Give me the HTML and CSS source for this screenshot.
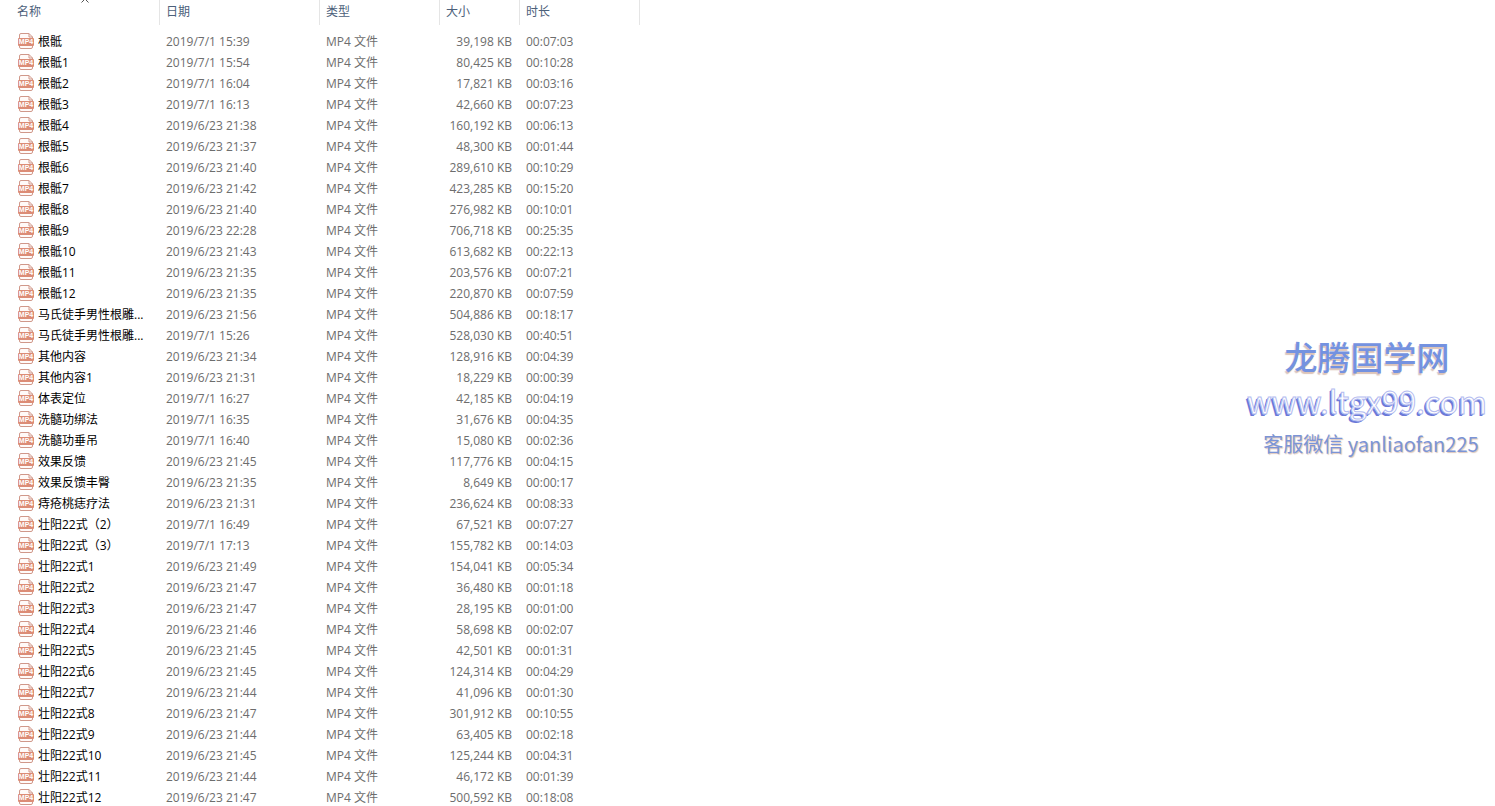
FILE: index.html
```html
<!DOCTYPE html>
<html lang="zh-CN">
  <head>
    <meta charset="UTF-8" />
    <meta name="viewport" content="width=device-width, initial-scale=1.0" />
    <title>文件列表</title>
    <link rel="stylesheet" href="styles.css">
  </head>
  <body>
    <main class="explorer">
      <table class="file-table">
        <thead>
          <tr>
            <th class="col-name" aria-sort="ascending">
              <button class="sort-btn">名称</button>
              <svg class="sort-arrow" viewBox="0 0 8 4" aria-hidden="true">
                <path d="M.5 3.500L4 0L7.500 3.500" fill="none" stroke="#555" />
              </svg>
            </th>
            <th class="col-date"><button class="sort-btn">日期</button></th>
            <th class="col-type"><button class="sort-btn">类型</button></th>
            <th class="col-size"><button class="sort-btn">大小</button></th>
            <th class="col-time"><button class="sort-btn">时长</button></th>
          </tr>
        </thead>
        <tbody id="file-list"></tbody>
      </table>

      <div class="watermark">
        <p class="watermark-title">龙腾国学网</p>
        <p class="watermark-url">www.ltgx99.com</p>
        <p class="watermark-contact">客服微信 yanliaofan225</p>
      </div>
    </main>

    <script>
      // 名称, 日期, 大小 (KB), 时长
      const files = [
        ["根骶", "2019/7/1 15:39", "39,198", "00:07:03"],
        ["根骶1", "2019/7/1 15:54", "80,425", "00:10:28"],
        ["根骶2", "2019/7/1 16:04", "17,821", "00:03:16"],
        ["根骶3", "2019/7/1 16:13", "42,660", "00:07:23"],
        ["根骶4", "2019/6/23 21:38", "160,192", "00:06:13"],
        ["根骶5", "2019/6/23 21:37", "48,300", "00:01:44"],
        ["根骶6", "2019/6/23 21:40", "289,610", "00:10:29"],
        ["根骶7", "2019/6/23 21:42", "423,285", "00:15:20"],
        ["根骶8", "2019/6/23 21:40", "276,982", "00:10:01"],
        ["根骶9", "2019/6/23 22:28", "706,718", "00:25:35"],
        ["根骶10", "2019/6/23 21:43", "613,682", "00:22:13"],
        ["根骶11", "2019/6/23 21:35", "203,576", "00:07:21"],
        ["根骶12", "2019/6/23 21:35", "220,870", "00:07:59"],
        ["马氏徒手男性根雕...", "2019/6/23 21:56", "504,886", "00:18:17"],
        ["马氏徒手男性根雕...", "2019/7/1 15:26", "528,030", "00:40:51"],
        ["其他内容", "2019/6/23 21:34", "128,916", "00:04:39"],
        ["其他内容1", "2019/6/23 21:31", "18,229", "00:00:39"],
        ["体表定位", "2019/7/1 16:27", "42,185", "00:04:19"],
        ["洗髓功绑法", "2019/7/1 16:35", "31,676", "00:04:35"],
        ["洗髓功垂吊", "2019/7/1 16:40", "15,080", "00:02:36"],
        ["效果反馈", "2019/6/23 21:45", "117,776", "00:04:15"],
        ["效果反馈丰臀", "2019/6/23 21:35", "8,649", "00:00:17"],
        ["痔疮桃痣疗法", "2019/6/23 21:31", "236,624", "00:08:33"],
        ["壮阳22式（2）", "2019/7/1 16:49", "67,521", "00:07:27"],
        ["壮阳22式（3）", "2019/7/1 17:13", "155,782", "00:14:03"],
        ["壮阳22式1", "2019/6/23 21:49", "154,041", "00:05:34"],
        ["壮阳22式2", "2019/6/23 21:47", "36,480", "00:01:18"],
        ["壮阳22式3", "2019/6/23 21:47", "28,195", "00:01:00"],
        ["壮阳22式4", "2019/6/23 21:46", "58,698", "00:02:07"],
        ["壮阳22式5", "2019/6/23 21:45", "42,501", "00:01:31"],
        ["壮阳22式6", "2019/6/23 21:45", "124,314", "00:04:29"],
        ["壮阳22式7", "2019/6/23 21:44", "41,096", "00:01:30"],
        ["壮阳22式8", "2019/6/23 21:47", "301,912", "00:10:55"],
        ["壮阳22式9", "2019/6/23 21:44", "63,405", "00:02:18"],
        ["壮阳22式10", "2019/6/23 21:45", "125,244", "00:04:31"],
        ["壮阳22式11", "2019/6/23 21:44", "46,172", "00:01:39"],
        ["壮阳22式12", "2019/6/23 21:47", "500,592", "00:18:08"],
      ];

      const mp4Icon = `<svg class="file-icon" viewBox="0 0 16 16" aria-hidden="true">
        <path d="M1.500 5V2Q1.500 .5 3 .5H11L14.500 4V5M1.500 12V14Q1.500 15.500 3 15.500H13Q14.500 15.500 14.500 14V12" fill="#fffaf8" stroke="#d0988a" />
        <path d="M11 .5V4H14.500" fill="none" stroke="#d0988a" />
        <rect x="0" y="5" width="16" height="8" rx="1" fill="#dc8c76" />
        <text class="icon-label" x="8" y="11" text-anchor="middle">MP4</text>
      </svg>`;

      document.getElementById("file-list").innerHTML = files
        .map(
          ([name, date, size, time]) => `
          <tr>
            <td class="file-name">${mp4Icon}${name}</td>
            <td>${date}</td>
            <td>MP4 文件</td>
            <td class="file-size">${size} KB</td>
            <td>${time}</td>
          </tr>`
        )
        .join("");
    </script>
  </body>
</html>
```
FILE: styles.css
```css
* {
  box-sizing: border-box;
}

body {
  margin: 0;
  background: white;
  font-family: "Open Sans", "Noto Sans CJK SC", sans-serif;
  font-size: 12px;
}

.explorer {
  position: relative;
  height: 100vh;
  overflow: hidden;
}

.file-table {
  width: 640px;
  table-layout: fixed;
  border-collapse: separate;
  border-spacing: 0;
  color: #6d6d6d;
}

.file-table th {
  position: relative;
  height: 25px;
  padding: 0 0 0 6px;
  border-right: 1px solid #e5e5e5;
  text-align: left;
  line-height: 20px;
  vertical-align: top;
}

.file-table .col-name {
  width: 160px;
  padding-left: 17px;
}

.col-date {
  width: 160px;
}

.col-type,
.col-time {
  width: 120px;
}

.col-size {
  width: 80px;
}

.sort-btn {
  display: block;
  padding: 2px 0 0;
  border: none;
  background: none;
  color: #4c607a;
  font: inherit;
  font-weight: normal;
  line-height: 20px;
  cursor: pointer;
}

.sort-arrow {
  position: absolute;
  top: -1px;
  left: 81px;
  width: 8px;
  height: 4px;
}

/* 表头与列表之间的间距 */
.file-table tbody::before {
  content: "";
  display: table-row;
  height: 6px;
}

.file-table td {
  height: 21px;
  padding: 0 0 0 6px;
  line-height: 20px;
  white-space: nowrap;
}

.file-table .file-name {
  padding-left: 18px;
  color: black;
}

.file-icon {
  width: 16px;
  height: 16px;
  margin-right: 4px;
  vertical-align: -3px;
}

.icon-label {
  fill: white;
  font-family: "Liberation Sans", sans-serif;
  font-size: 7px;
  font-weight: bold;
}

.file-table .file-size {
  padding: 0 8px 0 0;
  text-align: right;
}

.watermark {
  position: absolute;
  top: 334px;
  right: 8px;
  font-family: "Noto Sans CJK SC", sans-serif;
  text-align: center;
  white-space: nowrap;
}

.watermark p {
  margin: 0;
}

.watermark-title {
  color: #7492e0;
  font-size: 33px;
  font-weight: 500;
  line-height: 44px;
  text-shadow: -1px 2px 1px #dcc4b8;
}

.watermark-url {
  color: white;
  font-size: 31px;
  line-height: 46px;
  -webkit-text-stroke: 1px #b4bcf0;
  text-shadow: -1px 1px 0 #6b7ad8, -2px 2px 0 #6b7ad8;
}

.watermark-contact {
  padding-left: 8px;
  color: #7b94d6;
  font-size: 20px;
  line-height: 40px;
  text-shadow: 1px 1px 1px #dcc4b8;
}
```
